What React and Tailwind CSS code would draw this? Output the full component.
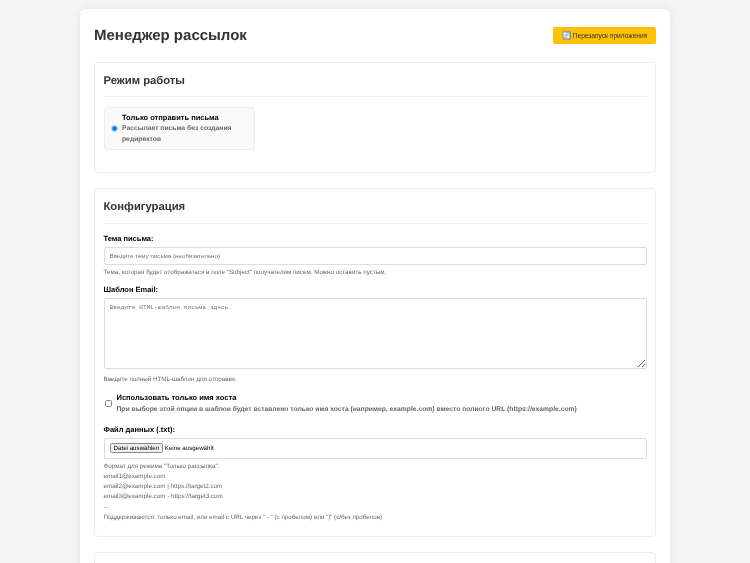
import React from "react";

function Section({ title, children, className = "" }) {
  return (
    <section className={`border border-[#eeeeee] rounded-[4px] bg-white px-[8.5px] pt-[10px] mb-[15px] ${className}`}>
      <h2 className="text-[11.25px] leading-[16px] font-bold text-[#333] pb-[7.5px] mb-[10px] border-b border-[#f0f0f0]">
        {title}
      </h2>
      {children}
    </section>
  );
}

export default function App() {
  return (
    <div className="h-[563px] overflow-hidden bg-[#f5f5f5] pt-[9px] font-['Liberation_Sans',Arial,sans-serif] text-[#333] [text-rendering:geometricPrecision]">
      <div className="w-[590px] ml-[80px] bg-white rounded-[6px] shadow-[0_0_8px_rgba(0,0,0,0.08)] px-[14px] pt-[18px] pb-[20px] will-change-transform">
        <div className="flex items-center justify-between h-[17px] mb-[17.5px]">
          <h1 className="text-[15px] leading-[17px] font-bold text-[#333]">Менеджер рассылок</h1>
          <button className="w-[103px] h-[17px] bg-[#ffc107] rounded-[2px] text-[6.6px] text-[#333] flex items-center justify-center gap-[2px]">
            <span className="text-[7.5px] leading-none">🔄</span> Перезапуск приложения
          </button>
        </div>

        <Section title="Режим работы" className="h-[111.5px]">
          <label className="flex items-center w-[151px] h-[43px] bg-[#f9f9f9] border border-[#eeeeee] rounded-[3px] pl-[6.5px] pr-[4px]">
            <input
              type="radio"
              defaultChecked
              className="appearance-none w-[7px] h-[7px] mr-[4px] shrink-0 rounded-full bg-[radial-gradient(circle,#0075ff_30%,#b8d6fb_60%,#e4eefb_100%)]"
            />
            <span>
              <span className="block text-[7.5px] leading-[11px] font-bold text-black">Только отправить письма</span>
              <span className="block text-[6.75px] leading-[11px] font-bold text-[#666]">Рассылает письма без создания редиректов</span>
            </span>
          </label>
        </Section>

        <Section title="Конфигурация" className="h-[348.5px]">
          <label className="block text-[7.5px] leading-[10px] font-bold text-black mb-[3px]">Тема письма:</label>
          <input
            placeholder="Введите тему письма (необязательно)"
            className="block w-full h-[18px] border border-[#dddddd] rounded-[2px] px-[5px] text-[6.2px] placeholder:text-[#757575]"
          />
          <p className="text-[6.25px] leading-[10px] text-[#666] mt-[3px] mb-[7px]">
            Тема, которая будет отображаться в поле "Subject" получателям писем. Можно оставить пустым.
          </p>

          <label className="block text-[7.5px] leading-[10px] font-bold text-black mb-[3px]">Шаблон Email:</label>
          <textarea
            placeholder="Введите HTML-шаблон письма здесь."
            className="block w-full h-[71px] border border-[#dddddd] rounded-[2px] px-[5px] py-[4px] text-[6.2px] leading-[9px] font-['Liberation_Mono',monospace] placeholder:text-[#757575]"
          />
          <p className="text-[6.25px] leading-[10px] text-[#666] mt-[6px] mb-[7px]">Введите полный HTML-шаблон для отправки.</p>

          <label className="flex items-center mb-[10px]">
            <input
              type="checkbox"
              className="appearance-none w-[7px] h-[7px] ml-[1.5px] mr-[4.5px] shrink-0 bg-white border border-[#8a8a8a] rounded-[1.5px]"
            />
            <span>
              <span className="block text-[7.5px] leading-[11px] font-bold text-black">Использовать только имя хоста</span>
              <span className="block text-[6.75px] leading-[11px] font-bold text-[#666] mt-[1px]">
                При выборе этой опции в шаблон будет вставлено только имя хоста (например, example.com) вместо полного URL (https://example.com)
              </span>
            </span>
          </label>

          <label className="block text-[7.5px] leading-[10px] font-bold text-black mb-[3px]">Файл данных (.txt):</label>
          <div className="flex items-center h-[21px] border border-[#dddddd] rounded-[2px] px-[5px] text-[6.2px] leading-[10px] text-black">
            <span className="flex items-center h-[10px] pt-[1.5px] px-[3px] bg-[#efefef] border border-[#8a8a8a] rounded-[1.5px] mr-[1.5px]">Datei auswählen</span>
            <span className="pt-[1.5px]">Keine ausgewählt</span>
          </div>
          <div className="text-[6.25px] leading-[10.2px] text-[#666] mt-[3px]">
            Формат для режима "Только рассылка":
            <br />email1@example.com
            <br />email2@example.com | https://target2.com
            <br />email3@example.com - https://target3.com
            <br />...
            <br />Поддерживаются: только email, или email с URL через " - " (с пробелом) или "|" (с/без пробелов)
          </div>
        </Section>

        <section className="h-[60px] border border-[#eeeeee] rounded-[4px]" />
      </div>
    </div>
  );
}
